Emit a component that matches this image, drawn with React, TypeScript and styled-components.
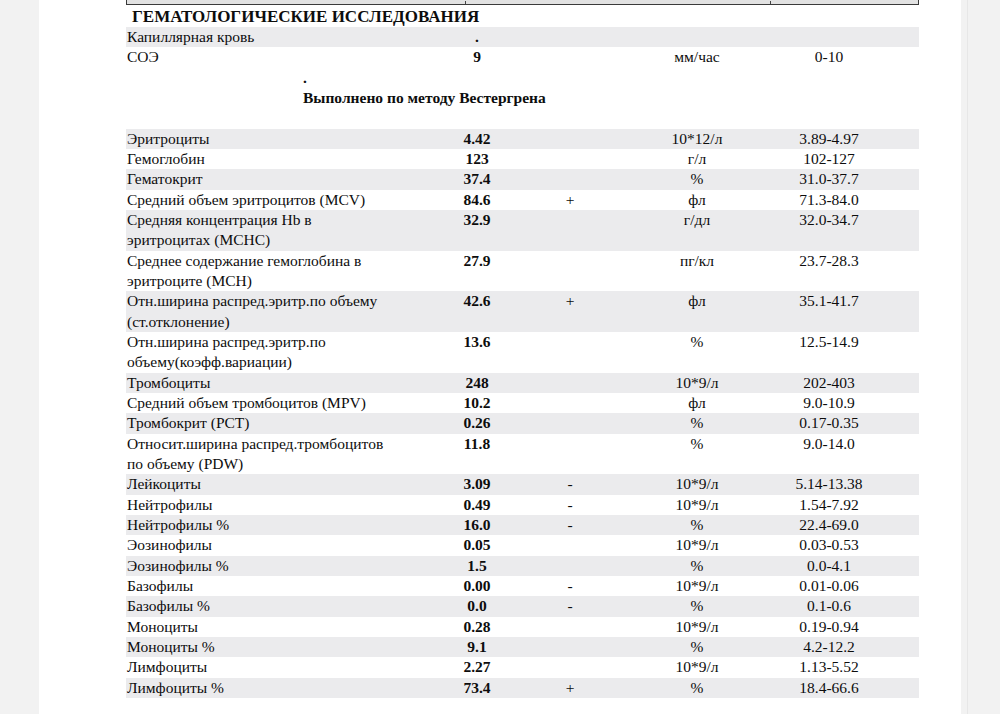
import React from "react";
import styled, { createGlobalStyle } from "styled-components";

const Global = createGlobalStyle`
  html, body { margin: 0; padding: 0; background: #f2f2f2; }
  body { font-family: "Liberation Serif", "Times New Roman", serif; color: #0d0d0d; }
`;

const Screen = styled.div`
  display: flex;
  width: 1000px;
  height: 714px;
  overflow: hidden;
  background: #f2f2f2;
`;

const Gutter = styled.div`
  width: 39px;
  flex: none;
`;

const RightGutter = styled.div`
  width: 39px;
  flex: none;
  padding-left: 6px;
  box-sizing: border-box;
`;

const GutterLine = styled.div`
  height: 100%;
  border-left: 1px solid #e7e7e7;
`;

const Page = styled.div`
  width: 922px;
  flex: none;
  background: #ffffff;
  padding: 0 42px 0 87px;
  box-sizing: border-box;
`;

const TopBox = styled.div`
  position: relative;
  height: 5px;
  background: #e2e2e2;
  border: 1.5px solid #3a3a3a;
  border-top: none;
  box-sizing: border-box;
`;

const Mark = styled.span<{ $left: number }>`
  position: absolute;
  left: ${(p) => p.$left}px;
  bottom: 0;
  width: 1px;
  height: 3px;
  background: #444;
`;

const Heading = styled.h1`
  margin: 0;
  padding: 0 0 0 6px;
  height: 22px;
  line-height: 24px;
  font-family: "Liberation Serif", "Times New Roman", serif;
  font-size: 17px;
  font-weight: 700;
`;

const Row = styled.div<{ $shade: boolean }>`
  display: grid;
  grid-template-columns: 294px 114px 72px 182px 82px 1fr;
  background: ${(p) => (p.$shade ? "#ebebed" : "transparent")};
  font-size: 15.5px;
  line-height: 20.33px;
`;

const Name = styled.div`
  padding-left: 1px;
  white-space: nowrap;
`;

const Value = styled.div`
  text-align: center;
  font-weight: 700;
`;

const Center = styled.div`
  text-align: center;
`;

const Note = styled.div`
  padding-left: 177px;
  font-size: 15.5px;
  line-height: 20.33px;
  height: 61px;
  font-weight: 700;
`;

type R = {
  name: string[];
  value: string;
  flag?: string;
  unit?: string;
  range?: string;
};

const top: R[] = [
  { name: ["Капиллярная кровь"], value: "." },
  { name: ["СОЭ"], value: "9", unit: "мм/час", range: "0-10" },
];

const rows: R[] = [
  { name: ["Эритроциты"], value: "4.42", unit: "10*12/л", range: "3.89-4.97" },
  { name: ["Гемоглобин"], value: "123", unit: "г/л", range: "102-127" },
  { name: ["Гематокрит"], value: "37.4", unit: "%", range: "31.0-37.7" },
  { name: ["Средний объем эритроцитов (MCV)"], value: "84.6", flag: "+", unit: "фл", range: "71.3-84.0" },
  { name: ["Средняя концентрация Hb в", "эритроцитах (MCHC)"], value: "32.9", unit: "г/дл", range: "32.0-34.7" },
  { name: ["Среднее содержание гемоглобина в", "эритроците (MCH)"], value: "27.9", unit: "пг/кл", range: "23.7-28.3" },
  { name: ["Отн.ширина распред.эритр.по объему", "(ст.отклонение)"], value: "42.6", flag: "+", unit: "фл", range: "35.1-41.7" },
  { name: ["Отн.ширина распред.эритр.по", "объему(коэфф.вариации)"], value: "13.6", unit: "%", range: "12.5-14.9" },
  { name: ["Тромбоциты"], value: "248", unit: "10*9/л", range: "202-403" },
  { name: ["Средний объем тромбоцитов (MPV)"], value: "10.2", unit: "фл", range: "9.0-10.9" },
  { name: ["Тромбокрит (PCT)"], value: "0.26", unit: "%", range: "0.17-0.35" },
  { name: ["Относит.ширина распред.тромбоцитов", "по объему (PDW)"], value: "11.8", unit: "%", range: "9.0-14.0" },
  { name: ["Лейкоциты"], value: "3.09", flag: "-", unit: "10*9/л", range: "5.14-13.38" },
  { name: ["Нейтрофилы"], value: "0.49", flag: "-", unit: "10*9/л", range: "1.54-7.92" },
  { name: ["Нейтрофилы %"], value: "16.0", flag: "-", unit: "%", range: "22.4-69.0" },
  { name: ["Эозинофилы"], value: "0.05", unit: "10*9/л", range: "0.03-0.53" },
  { name: ["Эозинофилы %"], value: "1.5", unit: "%", range: "0.0-4.1" },
  { name: ["Базофилы"], value: "0.00", flag: "-", unit: "10*9/л", range: "0.01-0.06" },
  { name: ["Базофилы %"], value: "0.0", flag: "-", unit: "%", range: "0.1-0.6" },
  { name: ["Моноциты"], value: "0.28", unit: "10*9/л", range: "0.19-0.94" },
  { name: ["Моноциты %"], value: "9.1", unit: "%", range: "4.2-12.2" },
  { name: ["Лимфоциты"], value: "2.27", unit: "10*9/л", range: "1.13-5.52" },
  { name: ["Лимфоциты %"], value: "73.4", flag: "+", unit: "%", range: "18.4-66.6" },
];

function ResultRow({ r, shade }: { r: R; shade: boolean }) {
  return (
    <Row $shade={shade}>
      <Name>
        {r.name.map((l, i) => (
          <div key={i}>{l}</div>
        ))}
      </Name>
      <Value>{r.value}</Value>
      <Center>{r.flag ?? ""}</Center>
      <Center>{r.unit ?? ""}</Center>
      <Center>{r.range ?? ""}</Center>
      <div />
    </Row>
  );
}

export default function App() {
  return (
    <>
      <Global />
      <Screen>
        <Gutter />
        <Page>
          <TopBox>
            <Mark $left={338} />
            <Mark $left={643} />
          </TopBox>
          <Heading>ГЕМАТОЛОГИЧЕСКИЕ ИССЛЕДОВАНИЯ</Heading>
          {top.map((r, i) => (
            <ResultRow key={i} r={r} shade={i % 2 === 0} />
          ))}
          <Note>
            <div>.</div>
            <div>Выполнено по методу Вестергрена</div>
          </Note>
          {rows.map((r, i) => (
            <ResultRow key={i} r={r} shade={i % 2 === 0} />
          ))}
        </Page>
        <RightGutter>
          <GutterLine />
        </RightGutter>
      </Screen>
    </>
  );
}
